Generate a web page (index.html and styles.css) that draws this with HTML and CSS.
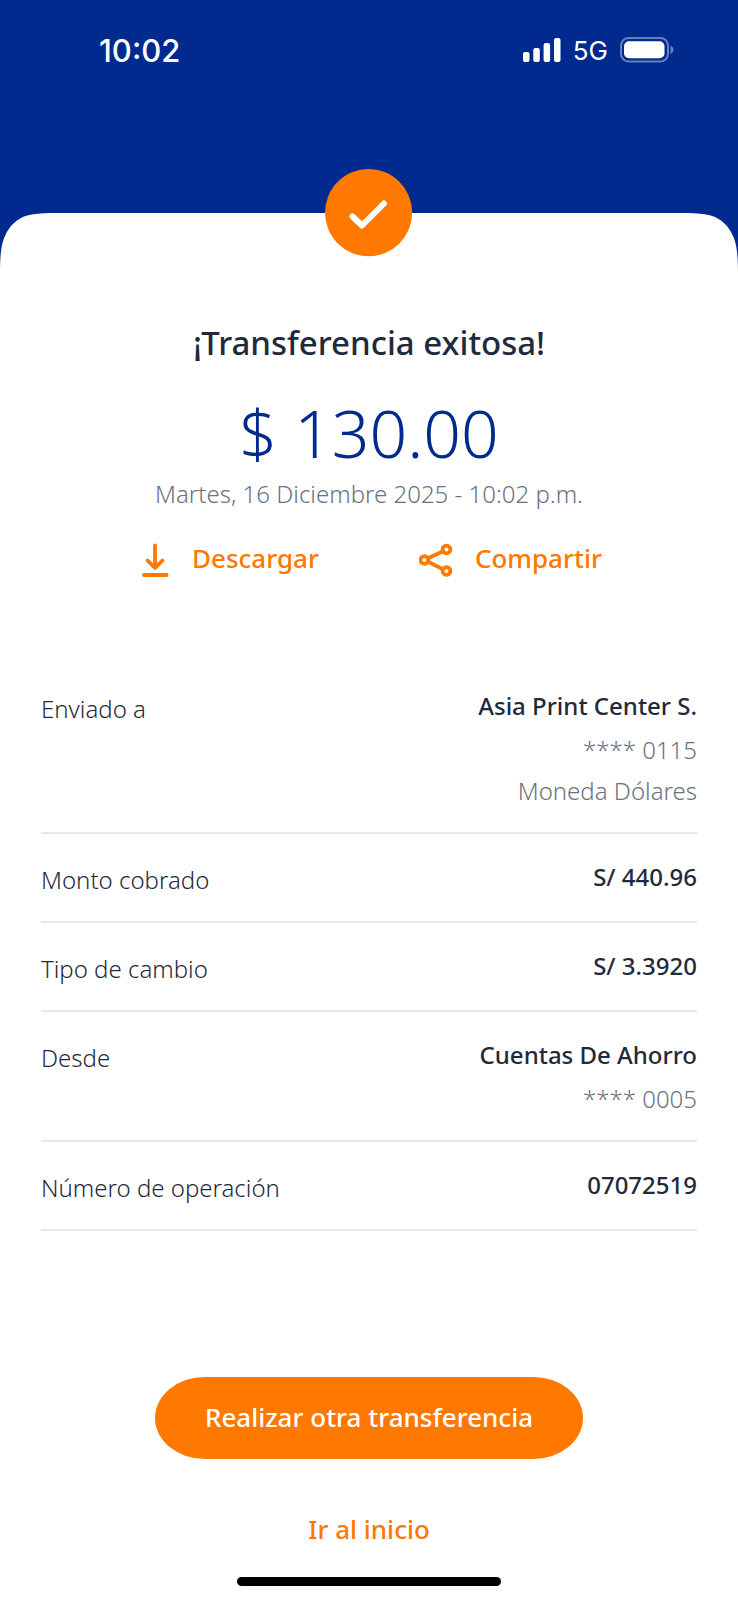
FILE: index.html
```html
<!DOCTYPE html>
<html lang="es">
<head>
<meta charset="utf-8">
<meta name="viewport" content="width=device-width, initial-scale=1">
<title>Transferencia exitosa</title>
<link rel="stylesheet" href="styles.css">
</head>
<body>
<div class="screen">
  <header class="hero">
    <div class="status-bar">
      <time class="status-time">10:02</time>
      <div class="status-icons">
        <svg class="signal" viewBox="0 0 38 24" role="img" aria-label="Señal">
          <rect x="0" y="14" width="6.5" height="10" rx="2"/>
          <rect x="10.3" y="10" width="6.5" height="14" rx="2"/>
          <rect x="20.6" y="5" width="6.5" height="19" rx="2"/>
          <rect x="31" y="0" width="6.5" height="24" rx="2"/>
        </svg>
        <span class="network">5G</span>
        <svg class="battery" viewBox="0 0 54 26" role="img" aria-label="Batería">
          <rect class="battery-case" x="1" y="1" width="47" height="23.5" rx="7.5"/>
          <rect class="battery-level" x="4" y="4.2" width="40.5" height="17" rx="5"/>
          <path class="battery-tip" d="M50.5 8.8c2 .6 3 2.2 3 4s-1 3.4-3 4z"/>
        </svg>
      </div>
    </div>
  </header>

  <main class="sheet">
    <div class="sheet-edge">
      <svg class="corner" viewBox="0 0 60 60" aria-hidden="true"><path d="M0 60C0 38 2 29 5.5 22C9 14 15 8 22 4.500C30 1 38 0 60 0V60Z"/></svg>
      <div class="edge-fill"></div>
      <svg class="corner" viewBox="0 0 60 60" aria-hidden="true"><path d="M60 60C60 38 58 29 54.500 22C51 14 45 8 38 4.500C30 1 22 0 0 0V60Z"/></svg>
      <svg class="badge" viewBox="0 0 88 88" role="img" aria-label="Completado">
        <circle cx="43.6" cy="43.6" r="43.6"/>
        <path d="M27.500 47.500L37 56.500L59 34.500"/>
      </svg>
    </div>

    <section class="summary">
      <h1 class="title">¡Transferencia exitosa!</h1>
      <p class="amount">$ 130.00</p>
      <p class="date">Martes, 16 Diciembre 2025 - 10:02 p.m.</p>
      <div class="actions">
        <button class="action" type="button">
          <svg class="action-icon" viewBox="0 0 34 34" aria-hidden="true"><path d="M19 2.500V24M11.500 17.500L19 24.800L26.500 17.500M8 32H30.500"/></svg>
          <span>Descargar</span>
        </button>
        <button class="action" type="button">
          <svg class="action-icon" viewBox="0 0 34 34" aria-hidden="true"><circle cx="5.500" cy="17" r="3.900"/><circle cx="27.500" cy="6.500" r="3.900"/><circle cx="27.500" cy="28" r="3.900"/><path d="M9 15.300L24 8.200M9 18.800L24 26.200"/></svg>
          <span>Compartir</span>
        </button>
      </div>
    </section>

    <dl class="details">
      <div class="row">
        <dt>Enviado a</dt>
        <dd><strong>Asia Print Center S.</strong><span>**** 0115</span><span>Moneda Dólares</span></dd>
      </div>
      <div class="row">
        <dt>Monto cobrado</dt>
        <dd><strong>S/ 440.96</strong></dd>
      </div>
      <div class="row">
        <dt>Tipo de cambio</dt>
        <dd><strong>S/ 3.3920</strong></dd>
      </div>
      <div class="row">
        <dt>Desde</dt>
        <dd><strong>Cuentas De Ahorro</strong><span>**** 0005</span></dd>
      </div>
      <div class="row">
        <dt>Número de operación</dt>
        <dd><strong>07072519</strong></dd>
      </div>
    </dl>

    <footer class="footer">
      <button class="primary" type="button">Realizar otra transferencia</button>
      <a class="home-link" href="#">Ir al inicio</a>
      <div class="home-indicator"></div>
    </footer>
  </main>
</div>
</body>
</html>
```
FILE: styles.css
```css
:root {
  --blue: #002a8d;
  --orange: #ff7800;
  --ink: #1f2a3c;
  --muted: #6a7280;
  --line: #e8e8ea;
}

* {
  box-sizing: border-box;
}

body {
  margin: 0;
  background: #fff;
  color: var(--ink);
  font-family: "Noto Sans", "Open Sans", sans-serif;
  font-size: 24px;
}

h1,
p,
dl,
dd {
  margin: 0;
}

button {
  border: 0;
  background: none;
  font: inherit;
  cursor: pointer;
}

.screen {
  display: flex;
  flex-direction: column;
  min-height: 100vh;
  background: var(--blue);
}

.hero {
  padding: 30px 64px 0 99px;
  height: 213px;
  color: #fff;
  font-family: Inter, "Liberation Sans", sans-serif;
}

.status-bar {
  display: flex;
  align-items: center;
  justify-content: space-between;
  height: 40px;
}

.status-time {
  font-size: 31px;
  font-weight: 500;
}

.status-icons {
  display: flex;
  align-items: center;
  gap: 12px;
}

.signal {
  width: 38px;
  height: 24px;
  fill: #fff;
}

.network {
  font-size: 26px;
}

.battery {
  width: 54px;
  height: 26px;
}

.battery-case {
  fill: none;
  stroke: #667fbb;
  stroke-width: 2;
}

.battery-level {
  fill: #fff;
}

.battery-tip {
  fill: #667fbb;
}

.sheet {
  display: flex;
  flex: 1;
  flex-direction: column;
}

.sheet-edge {
  display: flex;
  position: relative;
  height: 60px;
}

.corner {
  width: 60px;
  height: 60px;
  fill: #fff;
}

.edge-fill {
  flex: 1;
  background: #fff;
}

.badge {
  position: absolute;
  top: -44px;
  left: calc(50% - 44px);
  width: 88px;
  height: 88px;
}

.badge circle {
  fill: var(--orange);
}

.badge path {
  fill: none;
  stroke: #fff;
  stroke-width: 6;
  stroke-linecap: round;
  stroke-linejoin: round;
}

.summary {
  display: flex;
  flex-direction: column;
  align-items: center;
  padding-top: 48px;
  background: #fff;
  text-align: center;
}

.title {
  font-size: 33px;
  font-weight: 500;
  line-height: 44px;
}

.amount {
  margin-top: 25px;
  color: var(--blue);
  font-size: 66px;
  font-weight: 350;
  line-height: 84px;
}

.date {
  margin-top: 2px;
  color: var(--muted);
  font-weight: 300;
  line-height: 36px;
}

.actions {
  display: flex;
  gap: 100px;
  margin-top: 28px;
}

.action {
  display: flex;
  align-items: center;
  gap: 22px;
  padding: 0;
  color: var(--orange);
  font-size: 26px;
  font-weight: 500;
  line-height: 36px;
}

.action span {
  padding-bottom: 4px;
}

.action-icon {
  width: 34px;
  height: 34px;
  fill: none;
  stroke: currentColor;
  stroke-width: 3.8;
  stroke-linecap: round;
  stroke-linejoin: round;
}

.details {
  padding: 83px 41px 0;
  background: #fff;
}

.row {
  display: flex;
  justify-content: space-between;
  padding: 22px 0 21px;
  border-bottom: 2px solid var(--line);
  line-height: 41px;
}

.row dt {
  padding-top: 3px;
  font-weight: 300;
}

.row dd {
  display: flex;
  flex-direction: column;
  text-align: right;
}

.row strong {
  padding-bottom: 3px;
  font-weight: 500;
}

.row span {
  color: var(--muted);
  font-weight: 300;
}

.footer {
  display: flex;
  flex: 1;
  flex-direction: column;
  align-items: center;
  padding: 146px 41px 14px;
  background: #fff;
}

.primary {
  padding: 19px 50px 21px;
  border-radius: 50px / 41px;
  background: var(--orange);
  color: #fff;
  font-size: 26px;
  font-weight: 500;
  line-height: 42px;
}

.home-link {
  margin-top: 49px;
  color: var(--orange);
  font-size: 26px;
  font-weight: 500;
  line-height: 42px;
  text-decoration: none;
}

.home-indicator {
  width: 264px;
  height: 9px;
  margin-top: auto;
  border-radius: 5px;
  background: #000;
}
```
